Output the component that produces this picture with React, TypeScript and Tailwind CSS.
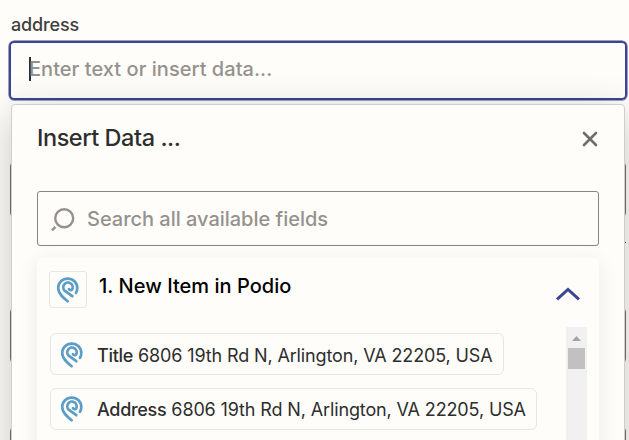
import React from "react";

const FIELDS = [
  { label: "Title", value: "6806 19th Rd N, Arlington, VA 22205, USA" },
  { label: "Address", value: "6806 19th Rd N, Arlington, VA 22205, USA" },
];

const PodioIcon: React.FC = () => (
  <svg
    width="22"
    height="26"
    viewBox="0 0 22 26"
    fill="none"
    stroke="#5b9dc6"
    strokeWidth="2.7"
    strokeLinecap="round"
    strokeLinejoin="round"
  >
    <path d="M10.6 24.2C6.1 20.6 1.2 16.6 1.2 11A9.5 9.4 0 0 1 20.3 11C20.3 13 19.8 14.6 19 15.9" />
    <path d="M15.3 19.2L7.6 13.6A4.7 4.7 0 1 1 15.2 12.4C14.4 13.5 12.8 13.4 12 12.2" />
  </svg>
);

export default function App() {
  return (
    <div className="relative h-[440px] w-[629px] overflow-hidden bg-[#fffdf9] font-['Inter',sans-serif] text-[#2d2e2e]">
      <div className="flex flex-col pl-[9px] pr-[2px] pt-[13px]">
        <label className="pl-[2px] text-[18px] leading-6 font-medium tracking-[-0.15px] text-[#403f3e]">
          address
        </label>
        <div className="mt-1 flex h-[59px] items-center rounded-[5px] border-2 border-[#3d4592] pb-[3px] pl-[18px] shadow-[0_0_0_0.5px_#3d4592]">
          <span className="h-6 w-[2px] bg-[#2d2e2e]" />
          <span className="-ml-[2px] text-[20px] font-[450] tracking-[0.04px] text-[#95928e]">
            Enter text or insert data...
          </span>
        </div>
        <div className="mr-px ml-px flex flex-col">
          <div className="mt-[62px] h-[55px] rounded-[4px] border border-[#77746f]" />
          <div className="mt-[91px] h-[55px] rounded-[4px] border border-[#77746f]" />
          <div className="mt-[64px] h-[55px] rounded-[4px] border border-[#77746f]" />
        </div>
      </div>

      <div className="absolute top-[104px] left-[11px] h-[600px] w-[614px] rounded-[4px] border border-[#d0cfcc] bg-[#fffdf9] px-[25px] shadow-[0_10px_40px_rgba(0,0,0,0.22)]">
        <div className="flex h-[67px] items-center justify-between">
          <h2 className="-mt-[2px] text-[23.5px] font-[550] tracking-[-0.45px]">
            Insert Data ...
          </h2>
          <svg
            className="mr-px"
            width="16"
            height="16"
            viewBox="0 0 16 16"
            stroke="#6f6e6e"
            strokeWidth="2.6"
            strokeLinecap="round"
          >
            <path d="M2 2L14 14M14 2L2 14" />
          </svg>
        </div>

        <div className="mt-[19px] flex h-[55px] items-center rounded-[3px] border border-[#88857f] pl-[13px]">
          <svg width="26" height="26" viewBox="0 0 26 26" fill="none" stroke="#95928e">
            <circle cx="13.2" cy="12.3" r="9" strokeWidth="2.4" />
            <path d="M1 24.3L4.4 20.9" strokeWidth="2.6" />
          </svg>
          <span className="ml-[10px] text-[20px] font-[450] tracking-[-0.02px] text-[#95928e]">
            Search all available fields
          </span>
        </div>

        <div className="mt-[12px] h-[400px] rounded-[5px] bg-[#fffdf9] pt-[13px] pr-[12px] pl-[12px] shadow-[0_4px_22px_rgba(0,0,0,0.08)]">
          <div className="flex">
            <div className="flex h-[37px] w-[38px] items-center justify-center rounded-[3px] border border-[#e8e6e2]">
              <PodioIcon />
            </div>
            <h3 className="ml-[12px] text-[20px] leading-[30px] font-medium tracking-[0.03px] text-black">
              1. New Item in Podio
            </h3>
            <svg
              className="mt-[16px] mr-[7px] ml-auto"
              width="24"
              height="14"
              viewBox="0 0 24 14"
              fill="none"
              stroke="#3d4592"
              strokeWidth="3"
            >
              <path d="M1 12.3L12 2.5L23 12.3" />
            </svg>
          </div>

          <div className="mt-[19px] flex justify-between">
            <div className="flex flex-col items-start gap-[13px] pt-[6px] pl-px">
              {FIELDS.map((field) => (
                <div
                  key={field.label}
                  className="flex h-[42px] items-center rounded-[6px] border border-[#e8e6e2] pr-[10px] pl-[10px] text-[18px] tracking-[-0.13px] whitespace-nowrap first:pt-[2px]"
                >
                  <PodioIcon />
                  <span className="ml-[14px] font-medium tracking-[-0.3px]">
                    {field.label}
                  </span>
                  <span className="ml-[5px]">{field.value}</span>
                </div>
              ))}
            </div>
            <div className="flex h-[300px] w-[21px] flex-col items-center bg-[#f1f1f1]">
              <svg className="mt-[9px]" width="9" height="5" viewBox="0 0 9 5">
                <path d="M0 5L4.5 0L9 5Z" fill="#a3a3a3" />
              </svg>
              <div className="mt-[7px] h-[21px] w-[17px] bg-[#c1c1c1]" />
            </div>
          </div>
        </div>
      </div>

      {/* end of the helper text that runs out past the menu */}
      <span className="absolute top-[242px] left-[625px] size-px bg-[#403f3e]" />
    </div>
  );
}
